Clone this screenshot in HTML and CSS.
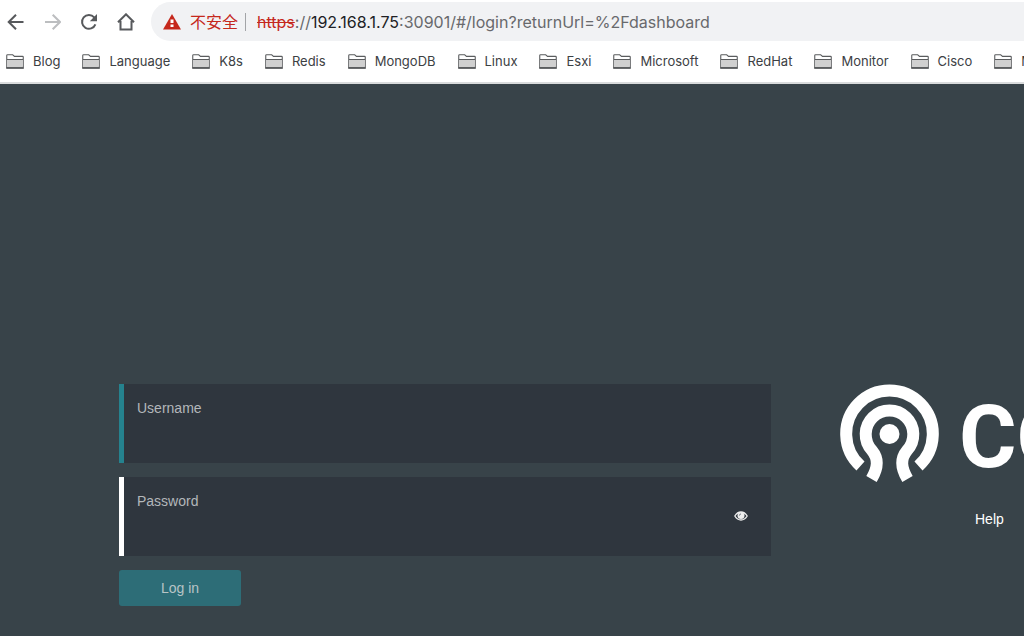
FILE: index.html
```
<!DOCTYPE html>
<html lang="en">
<head>
<meta charset="utf-8">
<title>Ceph login</title>
<link rel="stylesheet" href="styles.css">
</head>
<body>
<svg class="defs" aria-hidden="true">
  <symbol id="folder" viewBox="0 0 18 15">
    <path d="M.75 13.5V1.5Q.75.75 1.5.75h5.2l1.800 1.600h8q.75 0 .75.75v10z" fill="#fff" stroke="#5a5c5e" stroke-width="1.1"/>
    <path d="M1.4 5h15.2v8H1.4z" fill="#d0d0d0"/>
    <path d="M1 5.500h16" stroke="#5a5c5e" stroke-width="1"/>
    <path d="M.2 14h17.6" stroke="#5a5c5e" stroke-width="1.8"/>
  </symbol>
</svg>
<header class="browser">
  <div class="toolbar">
    <button class="nav" aria-label="Back"><svg viewBox="0 0 18 18"><path d="M17.500 9H3M10 1.700 2.700 9l7.300 7.300"/></svg></button>
    <button class="nav nav-off" aria-label="Forward" disabled><svg viewBox="0 0 18 18"><path d="M2 9h15M9.700 1.700 17 9l-7.300 7.300"/></svg></button>
    <button class="nav" aria-label="Reload"><svg viewBox="0 0 18 18"><path d="M15.4 11.4A6.9 6.9 0 1 1 14.2 4.4l1.6 1.8"/><path class="solid" d="M17 1v7.2H9.8z"/></svg></button>
    <button class="nav" aria-label="Home"><svg viewBox="0 0 18 18"><path d="M1 9.300 9 1.300l8 8M3.500 8v8.500h11V8"/></svg></button>
    <div class="address">
      <svg class="warning" viewBox="0 0 18 16" aria-hidden="true"><path d="M9 0l9 15.500H0z" fill="#c5281c"/><path d="M7.500 5.500h3v3.500h-3zM7.500 10.500h3v2.500h-3z" fill="#fff"/></svg>
      <span class="unsafe">不安全</span>
      <span class="url"><s>https</s>://<b>192.168.1.75</b>:30901/#/login?returnUrl=%2Fdashboard</span>
    </div>
  </div>
  <nav class="bookmarks" aria-label="Bookmarks">
    <a href="#"><svg><use href="#folder"/></svg>Blog</a>
    <a href="#"><svg><use href="#folder"/></svg>Language</a>
    <a href="#"><svg><use href="#folder"/></svg>K8s</a>
    <a href="#"><svg><use href="#folder"/></svg>Redis</a>
    <a href="#"><svg><use href="#folder"/></svg>MongoDB</a>
    <a href="#"><svg><use href="#folder"/></svg>Linux</a>
    <a href="#"><svg><use href="#folder"/></svg>Esxi</a>
    <a href="#"><svg><use href="#folder"/></svg>Microsoft</a>
    <a href="#"><svg><use href="#folder"/></svg>RedHat</a>
    <a href="#"><svg><use href="#folder"/></svg>Monitor</a>
    <a href="#"><svg><use href="#folder"/></svg>Cisco</a>
    <a href="#"><svg><use href="#folder"/></svg>M</a>
  </nav>
</header>
<main class="login">
  <form class="form">
    <div class="field field-active">
      <label for="user">Username</label>
      <input id="user" type="text">
    </div>
    <div class="field">
      <label for="pass">Password</label>
      <div class="row">
        <input id="pass" type="password">
        <button class="reveal" type="button" aria-label="Show password"><svg viewBox="0 0 14 10"><path d="M.8 5Q3.300 1 7 1T13.200 5Q10.700 9 7 9T.8 5z" fill="none" stroke="#eee" stroke-width="1.300"/><circle cx="7" cy="4.500" r="3.500" fill="#eee"/><path d="M5.400 4.600Q5.400 3 7 2.900" fill="none" stroke="#59616a" stroke-width=".8"/></svg></button>
      </div>
    </div>
    <button class="submit" type="submit">Log in</button>
  </form>
  <aside class="brand">
    <div class="logo">
      <svg viewBox="0 0 100 100" aria-hidden="true">
        <g fill="none" stroke="#fff" stroke-width="12">
          <path d="M21.500 82A43.300 43.300 0 1 1 79.500 82"/>
          <path d="M32.500 95C39 84 40 75 33 66.500A23.800 23.800 0 1 1 68 66.500C61 75 62 84 68.500 95"/>
        </g>
        <circle cx="50.500" cy="50" r="10" fill="#fff"/>
      </svg>
      <span class="wordmark">CO</span>
    </div>
    <a class="help" href="#">Help</a>
  </aside>
</main>
</body>
</html>
```

FILE: styles.css
```
* { box-sizing: border-box; }
body {
  margin: 0;
  min-height: 100vh;
  display: flex;
  flex-direction: column;
  overflow: hidden;
  background: #384349;
  font-family: "Liberation Sans", Arial, sans-serif;
  font-size: 14px;
}
button { border: 0; padding: 0; background: none; font: inherit; }
a { color: inherit; text-decoration: none; }
.defs { display: none; }
.browser {
  background: #fff;
  border-bottom: 2px solid #d9dbdc;
  overflow: hidden;
  font-family: Inter, "Noto Sans CJK SC", sans-serif;
}
.toolbar { display: flex; align-items: center; padding: 2px 0 0 6px; }
.nav { width: 18px; height: 18px; margin-right: 19px; flex: none; }
.nav:nth-of-type(4) { margin-right: 16px; }
.nav svg { display: block; width: 18px; height: 18px; fill: none; stroke: #57595c; stroke-width: 2; }
.nav .solid { fill: #57595c; stroke: none; }
.nav-off svg { stroke: #bcbec0; }
.address {
  flex: 1;
  display: flex;
  align-items: center;
  height: 39px;
  padding-left: 12px;
  border-radius: 20px 0 0 20px;
  background: #f1f2f4;
  color: #68696c;
  font-size: 16px;
  white-space: nowrap;
}
.warning { width: 18px; height: 16px; margin-right: 9px; }
.unsafe { padding-right: 7px; border-right: 1px solid #a2a4a7; line-height: 18px; color: #c5281c; }
.url { margin-left: 11px; }
.url s { color: #c5281c; }
.url b { color: #202124; font-weight: 400; }
.bookmarks { display: flex; gap: 22px; padding: 0 0 1px 6px; height: 41px; align-items: center; color: #3c4043; font-size: 13px; }
.bookmarks a { display: flex; align-items: center; flex: none; gap: 9px; }
.bookmarks svg { width: 18px; height: 15px; }
.login {
  flex: 1;
  display: grid;
  grid-template-columns: minmax(0, 652px) minmax(0, 1fr);
  gap: 68px;
  align-content: end;
  padding: 0 0 30px 119px;
}
.form { display: flex; flex-direction: column; gap: 14px; }
.field {
  height: 79px;
  padding: 15px 20px 0 13px;
  border-left: 5px solid #fff;
  background: #2f363e;
  color: #b3b7ba;
}
.field-active { border-color: #25828e; }
.field label { display: block; line-height: 18px; }
.field input { width: 100%; min-width: 0; border: 0; outline: 0; padding: 0; background: none; color: #fff; font: inherit; }
.row { display: flex; }
.reveal { display: flex; align-items: center; width: 20px; height: 12px; justify-content: center; }
.reveal svg { width: 14px; height: 10px; }
.submit { width: 122px; height: 36px; border-radius: 3px; background: #2d6d77; color: #b8c4c6; }
.brand { display: flex; flex-direction: column; gap: 26px; color: #fff; overflow: hidden; }
.logo { display: flex; align-items: center; gap: 20px; height: 100px; }
.logo svg { flex: none; width: 100px; height: 100px; }
.wordmark { padding-top: 6px; font: 700 88px/100px Roboto, sans-serif; }
.help { line-height: 18px; margin-left: 136px; }
```
